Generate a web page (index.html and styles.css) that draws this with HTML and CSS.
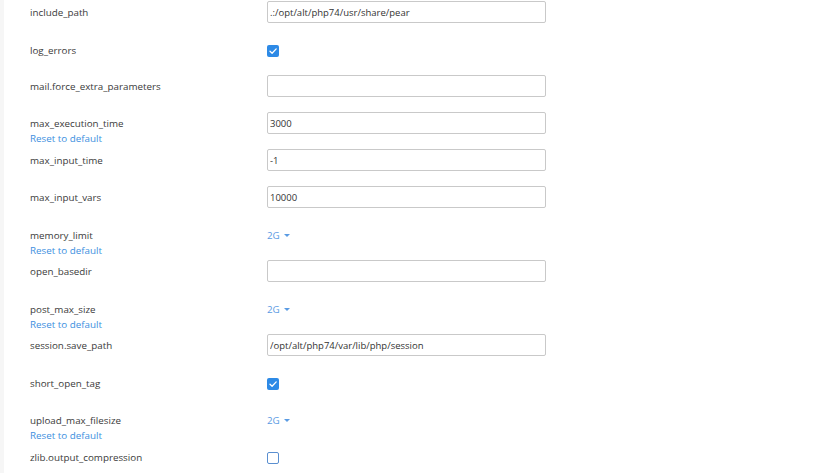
FILE: index.html
```html
<!DOCTYPE html>
<html>
<head>
<meta charset="utf-8">
<link rel="stylesheet" href="styles.css">
</head>
<body>
<div class="page">
  <div class="edge"></div>
  <div class="list">
    <div class="row"><div class="name"><div class="label">include_path</div></div><div class="ctl"><input class="text" type="text" value=".:/opt/alt/php74/usr/share/pear"></div></div>
    <div class="row boolrow"><div class="name"><div class="label">log_errors</div></div><div class="ctl"><span class="check on"><svg viewBox="0 0 12 12" width="12" height="12"><path d="M3 6.2 L5.1 8.2 L9.2 3.9" fill="none" stroke="#fff" stroke-width="1.3" stroke-linecap="round" stroke-linejoin="round"/></svg></span></div></div>
    <div class="row"><div class="name"><div class="label">mail.force_extra_parameters</div></div><div class="ctl"><input class="text" type="text" value=""></div></div>
    <div class="row"><div class="name"><div class="label">max_execution_time</div><a class="reset">Reset to default</a></div><div class="ctl"><input class="text" type="text" value="3000"></div></div>
    <div class="row"><div class="name"><div class="label">max_input_time</div></div><div class="ctl"><input class="text" type="text" value="-1"></div></div>
    <div class="row"><div class="name"><div class="label">max_input_vars</div></div><div class="ctl"><input class="text" type="text" value="10000"></div></div>
    <div class="row droprow"><div class="name"><div class="label">memory_limit</div><a class="reset">Reset to default</a></div><div class="ctl"><span class="drop">2G<span class="caret"></span></span></div></div>
    <div class="row"><div class="name"><div class="label">open_basedir</div></div><div class="ctl"><input class="text" type="text" value=""></div></div>
    <div class="row droprow"><div class="name"><div class="label">post_max_size</div><a class="reset">Reset to default</a></div><div class="ctl"><span class="drop">2G<span class="caret"></span></span></div></div>
    <div class="row"><div class="name"><div class="label">session.save_path</div></div><div class="ctl"><input class="text" type="text" value="/opt/alt/php74/var/lib/php/session"></div></div>
    <div class="row boolrow"><div class="name"><div class="label">short_open_tag</div></div><div class="ctl"><span class="check on"><svg viewBox="0 0 12 12" width="12" height="12"><path d="M3 6.2 L5.1 8.2 L9.2 3.9" fill="none" stroke="#fff" stroke-width="1.3" stroke-linecap="round" stroke-linejoin="round"/></svg></span></div></div>
    <div class="row droprow"><div class="name"><div class="label">upload_max_filesize</div><a class="reset">Reset to default</a></div><div class="ctl"><span class="drop">2G<span class="caret"></span></span></div></div>
    <div class="row boolrow"><div class="name"><div class="label">zlib.output_compression</div></div><div class="ctl"><span class="check"></span></div></div>
  </div>
</div>
</body>
</html>
```

FILE: styles.css
```css
html, body {
  margin: 0;
  padding: 0;
  background: #fff;
}
body {
  font-family: "Open Sans", "Liberation Sans", sans-serif;
  font-size: 9.8px;
  color: #333;
}
.page {
  display: flex;
  min-height: 473px;
}
.edge {
  width: 4px;
  background: #f6f6f6;
  flex: none;
}
.list {
  padding-top: 1px;
  padding-left: 26px;
}
.row {
  display: grid;
  grid-template-columns: 237px 279px;
  height: 37px;
}
.name {
  padding-top: 4px;
}
.boolrow .name {
  padding-top: 5px;
}
.droprow .name {
  padding-top: 5px;
}
.label {
  line-height: 15px;
  color: #3a3a3a;
}
.reset {
  display: block;
  line-height: 15px;
  color: #3c8fe0;
  cursor: pointer;
}
.ctl {
  display: flex;
  align-items: flex-start;
}
.text {
  box-sizing: border-box;
  width: 279px;
  height: 22px;
  margin: 0;
  padding: 0 2px;
  border: 1px solid #c9c9c9;
  border-radius: 2px;
  font-family: "Open Sans", "Liberation Sans", sans-serif;
  font-size: 9.5px;
  color: #333;
  background: #fff;
  outline: none;
}
.check {
  box-sizing: border-box;
  margin-top: 7px;
  width: 12px;
  height: 12px;
  border-radius: 2px;
  border: 1.5px solid #5a8fd0;
  background: #fff;
  display: flex;
  align-items: center;
  justify-content: center;
}
.check.on {
  background: #2d8ae6;
  border: none;
}
.drop {
  margin-top: 5px;
  line-height: 15px;
  color: #5a9be3;
  display: flex;
  align-items: center;
}
.caret {
  margin-left: 4px;
  width: 0;
  height: 0;
  border-left: 3px solid transparent;
  border-right: 3px solid transparent;
  border-top: 3px solid #5a9be3;
}
```
